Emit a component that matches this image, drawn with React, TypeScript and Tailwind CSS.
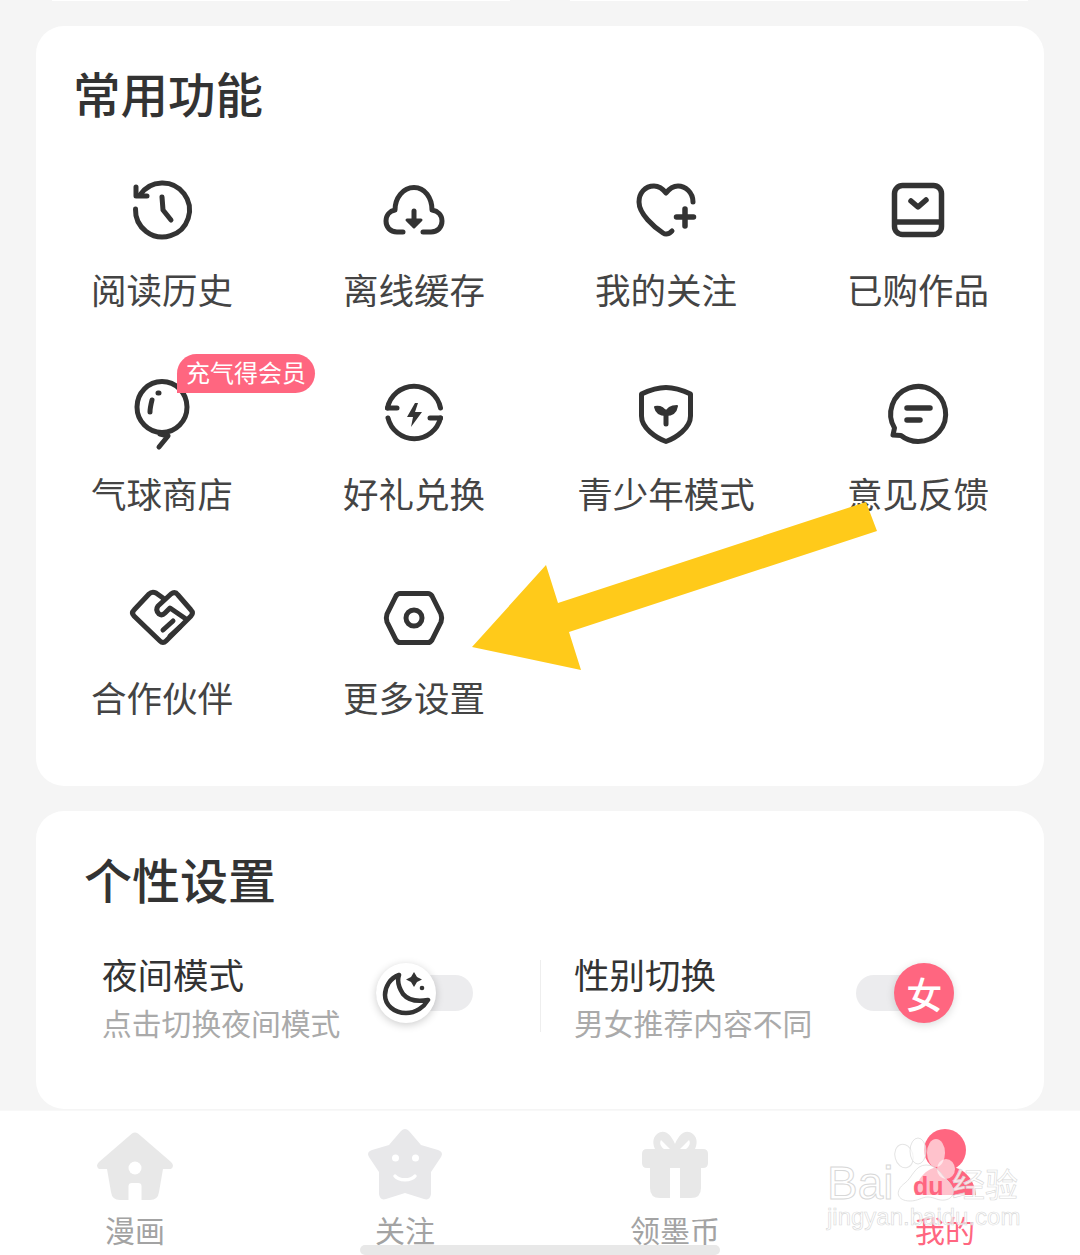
import React from "react";
const S = "#333333";
function Ic({ children }: { children: React.ReactNode }) {
  return (
    <svg width="64" height="64" viewBox="0 0 64 64" fill="none" stroke={S} strokeWidth="5" strokeLinecap="round" strokeLinejoin="round" className="overflow-visible">
      {children}
    </svg>
  );
}
const icons: Record<string, React.ReactNode> = {
  history: (<><path d="M5.5 31A27 27 0 1 0 10 17" /><path d="M6 9V18H17" /><path d="M32 19L33 32L41 42" /></>),
  cloud: (<><path d="M21 54H15C8 54 4 49 4 43C4 37 8 33 13 32C13 20 21 9.5 32 9.5C43 9.5 50 20 50 32C56 33 60 37 60 43C60 49 56 54 49 54H41" /><path d="M32 33V46" /><path d="M25 42L32 49L39 42Z" fill={S} strokeWidth="3" /></>),
  heart: (<><path d="M59 24C59 14 51 8 44 8C39 8 35 11 32 15C29 11 25 8 20 8C11 8 5 15 5 24C5 36 20 49 29 55C32 57 35 56 38 53" /><path d="M51 31V48M42.5 39H59.5" strokeWidth="5.5" /></>),
  book: (<><rect x="8.5" y="7.5" width="47" height="49" rx="8" strokeWidth="5.5" /><path d="M8.5 44H55.5" strokeLinecap="butt" strokeWidth="5.5" /><path d="M25 23L32 29L40 22" strokeWidth="5.5" /></>),
  balloon: (<><ellipse cx="32" cy="25" rx="25" ry="25.5" /><path d="M30 52L38 54L29 65" /><path d="M20 30C20 26 21 22 22 18M28 11L29 11" /></>),
  gift: (<><path d="M5.5 26A27 27 0 0 1 58.5 26" /><path d="M5.5 26H15" /><path d="M6 36A27 27 0 0 0 58.5 36" /><path d="M48 36H58.5" /><path d="M33 21L25 35H31L29 45L40 30H33L36 21Z" fill={S} stroke="none" /></>),
  shield: (<><path d="M32 5.5C38 5.5 48 8 56.5 12V34C56.5 46 42 56 32 59.5C22 56 7.5 46 7.5 34V12C16 8 26 5.5 32 5.5Z" /><path d="M32 30V42" /><path d="M32 33C26 33 22 30 21 25C27 24 31 27 32 31C33 27 37 24 43 24C42 30 38 33 32 33Z" fill={S} stroke={S} strokeWidth="2" /></>),
  chat: (<><path d="M32 59.5A27.5 27.5 0 1 0 8.5 46L7 53L15 53.5C20 57.5 26 59.5 32 59.5Z" /><path d="M21 26H44M21 38H34" strokeWidth="5.5" /></>),
  hands: (<><path d="M33 12L26 7Q22 5 19 8L4 24Q1 27 4 30L30 55Q33 58 36 55L61 30Q64 27 61 24L48 9Q45 5 41 8L28 20Q25 24 29 28Q32 30 35 27L40 22L56 33" /><path d="M33 44L43 35M40 50L50 41" /></>),
  hex: (<><path d="M18 7.5H46C48 7.5 49 8.5 50 10L59 28C60 31 60 33 59 36L50 54C49 55.5 48 56.5 46 56.5H18C16 56.5 15 55.5 14 54L5 36C4 33 4 31 5 28L14 10C15 8.5 16 7.5 18 7.5Z" /><circle cx="32" cy="32" r="8" /></>),
};
const items: [string, string][] = [
  ["history", "阅读历史"], ["cloud", "离线缓存"], ["heart", "我的关注"], ["book", "已购作品"],
  ["balloon", "气球商店"], ["gift", "好礼兑换"], ["shield", "青少年模式"], ["chat", "意见反馈"],
  ["hands", "合作伙伴"], ["hex", "更多设置"],
];
function Setting({ title, sub }: { title: string; sub: string }) {
  return (
    <div className="flex flex-col">
      <div className="h-[48px] whitespace-nowrap text-[35.5px] leading-[48px] text-[#333]">{title}</div>
      <div className="h-[48px] whitespace-nowrap text-[29.8px] leading-[48px] text-[#aaaaaa]">{sub}</div>
    </div>
  );
}
const Nav = ({ label, pink, children }: { label: string; pink?: boolean; children: React.ReactNode }) => (
  <div className="flex w-[270px] flex-col items-center">
    <svg width="80" height="80" viewBox="0 0 80 80" className="mt-[15px] overflow-visible">{children}</svg>
    <div className={`mt-[3px] h-[40px] text-[30px] leading-[40px] ${pink ? "text-[#ff6680]" : "text-[#a3a3a3]"}`}>{label}</div>
  </div>
);
export default function App() {
  return (
    <div className="relative flex h-[1255px] w-[1080px] flex-col overflow-hidden bg-[#f5f5f5] font-['Noto_Sans_CJK_SC','Noto_Sans',sans-serif]">
      <div className="flex h-[26px] shrink-0 items-start pl-[52px]">
        <div className="h-[1px] w-[458px] bg-white" />
        <div className="ml-[60px] h-[1px] w-[458px] bg-white" />
      </div>
      <section className="mx-[36px] h-[760px] shrink-0 rounded-[28px] bg-white">
        <h2 className="ml-[37px] mt-[35px] h-[64px] text-[47.5px] font-medium leading-[64px] text-[#333]">常用功能</h2>
        <div className="mt-[53px] grid grid-cols-4">
          {items.map(([k, t]) => (
            <div key={k} className="relative flex h-[204px] flex-col items-center">
              <Ic>{icons[k]}</Ic>
              <div className="mt-[23px] h-[48px] whitespace-nowrap text-[35.5px] leading-[48px] text-[#444]">{t}</div>
              {k === "balloon" && (
                <div className="absolute left-[141px] top-[-28px] flex h-[39px] w-[138px] items-center justify-center rounded-[20px] rounded-bl-none bg-[#ff6680] pb-[3px] text-[24px] text-white">充气得会员</div>
              )}
            </div>
          ))}
        </div>
      </section>
      <section className="mx-[36px] mt-[25px] h-[298px] shrink-0 rounded-[28px] bg-white">
        <h2 className="ml-[48px] mt-[35px] h-[64px] text-[48px] font-medium leading-[64px] text-[#333]">个性设置</h2>
        <div className="flex items-center pt-[40px]">
          <div className="flex w-[504px] items-center pl-[66px]">
            <Setting title="夜间模式" sub="点击切换夜间模式" />
            <div className="relative mb-[10px] ml-[36px] h-[36px] w-[97px] rounded-full bg-[#ececee]">
              <div className="absolute left-0 top-[-12px] flex h-[60px] w-[60px] items-center justify-center rounded-full bg-white shadow-[0_2px_8px_rgba(0,0,0,0.2)]">
                <svg width="50" height="50" viewBox="0 0 50 50" fill="none" stroke="#333" strokeWidth="4.5" strokeLinecap="round" strokeLinejoin="round">
                  <path d="M18 7C9 10 4 19 4 27C4 37 13 45 25 45C35 45 43 39 47 32C36 34 27 32 22 26C18 20 16 13 18 7Z" />
                  <path d="M33 4L36 9L41 11.5L36 14L33 19L30 14L25 11.5L30 9Z" fill="#333" stroke="none" />
                  <circle cx="41" cy="20" r="2.3" fill="#333" stroke="none" />
                </svg>
              </div>
            </div>
          </div>
          <div className="mb-[4px] h-[72px] w-[1px] bg-[#eeeeee]" />
          <div className="flex flex-1 items-center pl-[33px]">
            <Setting title="性别切换" sub="男女推荐内容不同" />
            <div className="relative mb-[10px] ml-[44px] h-[36px] w-[98px] rounded-full bg-[#ececee]">
              <div className="absolute right-0 top-[-12px] flex h-[60px] w-[60px] items-center justify-center rounded-full bg-[#ff6680] text-[36px] font-medium text-white shadow-[0_2px_8px_rgba(0,0,0,0.15)]">女</div>
            </div>
          </div>
        </div>
      </section>
      <nav className="mt-[1px] flex h-[145px] shrink-0 border-t border-[#f8f8f8] bg-white">
        <Nav label="漫画">
          <path d="M37 7.5Q40 5.5 43 7.5L76 36Q80 40 76 43H68L64 66Q63 74 55 74H25Q17 74 16 66L12 43H4Q0 40 4 36Z" fill="#e8e8e8" />
          <circle cx="40" cy="42" r="6.5" fill="#fff" />
          <path d="M33.5 74V60Q33.5 57 37 57H43Q46.5 57 46.5 60V74Z" fill="#fff" />
        </Nav>
        <Nav label="关注">
          <path d="M36 5Q40 1 44 5L56 19L73 24Q79 26 76 31L66 46L66 68Q65 75 59 73L40 67L21 73Q15 75 14 68L14 46L4 31Q1 26 7 24L24 19Z" fill="#e8e8ea" />
          <circle cx="30.5" cy="32" r="3.5" fill="#fff" />
          <circle cx="50.5" cy="32" r="3.5" fill="#fff" />
          <path d="M30 50C34 55 46 55 50 50" fill="none" stroke="#fff" strokeWidth="3.5" strokeLinecap="round" />
        </Nav>
        <Nav label="领墨币">
          <path d="M22 8C29 3 35 7 40 18C45 7 51 3 58 8C63 12 62 19 60 23H68Q73 23 73 28V37Q73 42 68 42H66V62Q66 72 56 72H45V42H35V72H25Q15 72 15 62V42H12Q7 42 7 37V28Q7 23 12 23H20C18 19 17 12 22 8Z" fill="#e8e8e8" />
          <path d="M26 14L35 23H29C26 21 24 17 26 14ZM54 14L45 23H51C54 21 56 17 54 14Z" fill="#fff" />
        </Nav>
        <Nav label="我的" pink>
          <circle cx="40" cy="24" r="21" fill="#ff6680" />
          <path d="M10 69C11 52 22 40 40 40C58 40 69 52 71 69Z" fill="#ff6680" />
        </Nav>
      </nav>
      <div className="absolute bottom-0 left-[360px] h-[10px] w-[360px] rounded-full bg-[#e8e8e8]" />
      <svg className="absolute left-0 top-0" width="1080" height="1255" viewBox="0 0 1080 1255" fill="none">
        <polygon points="866,502 877,531 569,632 581,670 472,647 546,565 558,603" fill="#ffca1a" />
        <g fill="#ffffff" fillOpacity="0.6" stroke="#dddddd" strokeOpacity="0.8" strokeWidth="1">
          <ellipse cx="904" cy="1156" rx="9" ry="12" transform="rotate(-15 904 1156)" />
          <ellipse cx="918" cy="1151" rx="8" ry="13" />
          <ellipse cx="936" cy="1153" rx="9" ry="14" stroke="none" />
          <ellipse cx="946" cy="1169" rx="9" ry="10" stroke="none" />
          <path d="M926 1165C915 1165 912 1178 905 1183C894 1191 897 1201 910 1201C918 1201 922 1197 928 1197C934 1197 938 1201 945 1200C956 1198 955 1188 948 1181C941 1175 938 1165 926 1165Z" />
        </g>
      </svg>
      <div className="absolute left-[827px] top-[1160px] flex h-[78px] w-[195px] flex-col">
        <div className="relative flex h-[46px] items-center font-['Liberation_Sans',sans-serif] text-[46px] leading-none text-white/70 [-webkit-text-stroke:1px_#d8d8d8]">
          Bai
          <span className="absolute left-[86px] top-[14px] text-[25px] font-bold text-[#ff6680] [-webkit-text-stroke:0]">du</span>
          <span className="absolute left-[125px] top-[7px] whitespace-nowrap font-['Noto_Sans_CJK_SC',sans-serif] text-[33px] text-white/80 [-webkit-text-stroke:0.6px_#d8d8d8]">经验</span>
        </div>
        <div className="mt-[-3px] whitespace-nowrap font-['Liberation_Sans',sans-serif] text-[24px] leading-[28px] text-white/70 [-webkit-text-stroke:0.6px_#d8d8d8]">jingyan.baidu.com</div>
      </div>
    </div>
  );
}
